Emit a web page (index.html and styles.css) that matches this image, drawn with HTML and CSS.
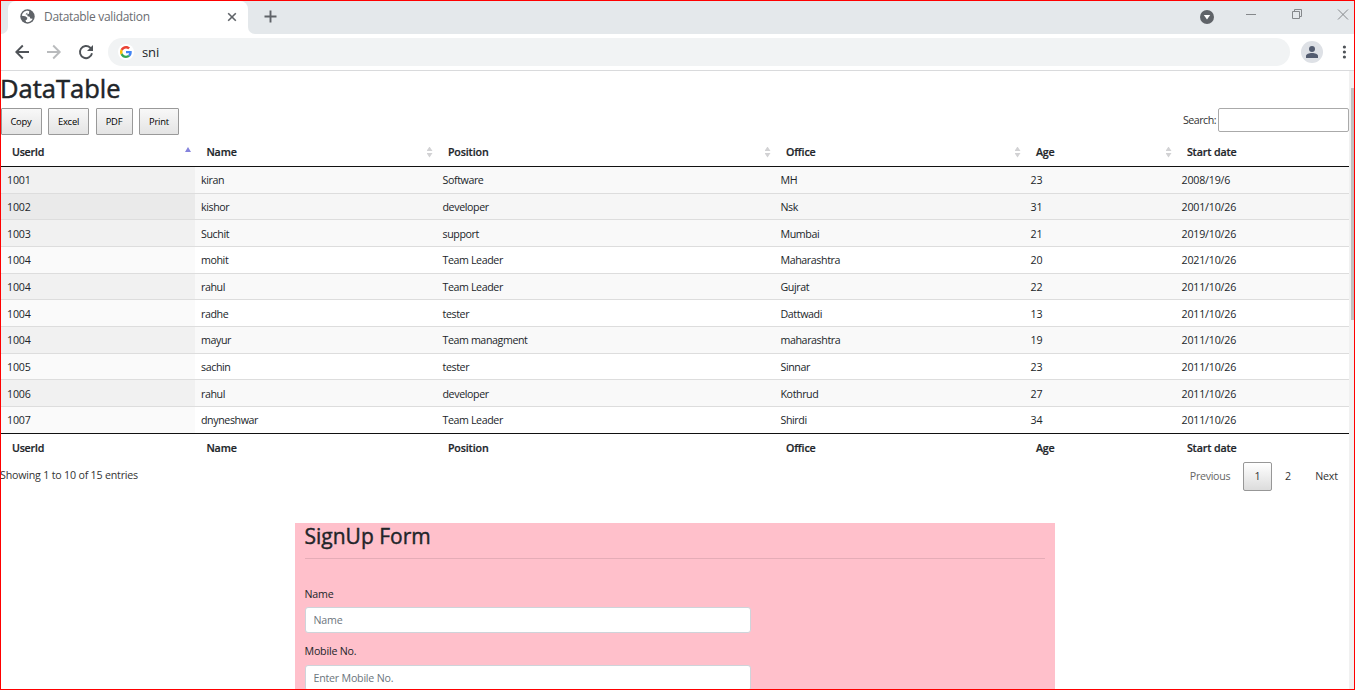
FILE: index.html
```html
<!DOCTYPE html>
<html lang="en">
<head>
<meta charset="utf-8">
<title>Datatable validation</title>
<link rel="stylesheet" href="styles.css">
</head>
<body>
<div class="window">
  <header class="tabstrip">
    <div class="tab-prev"></div>
    <div class="tab">
      <svg class="globe" width="15" height="15" viewBox="0 0 15 15"><circle cx="7.5" cy="7.5" r="7.2" fill="#5f6368"/><path d="M7.500 1.800C4.500 1.800 2.200 4 1.900 6.800L5.300 7.200 7.300 8.800 7 10.500 5.500 11.300 6.200 13.100C9 13.600 11.500 12.200 12.700 9.700L10.300 9.500 9.700 7.800 7.600 7.300 7.100 5.500 8.900 4.700 9.300 2.200Z" fill="#fff"/><path d="M7.300 3.500L5.500 5.200 7.400 5.800z" fill="#5f6368"/></svg>
      <span class="tab-title">Datatable validation</span>
      <svg class="tab-close" width="10" height="10" viewBox="0 0 10 10"><path d="M1.200 1.200l7.600 7.600M8.800 1.200l-7.600 7.600" stroke="#5f6368" stroke-width="1.600"/></svg>
    </div>
    <div class="strip-rest">
      <svg class="plus" width="13" height="13" viewBox="0 0 13 13"><path d="M6.500 .5v12M.5 6.500h12" stroke="#5f6368" stroke-width="1.900"/></svg>
      <svg class="controls" width="156" height="20" viewBox="0 0 156 20"><circle cx="9" cy="11" r="7" fill="#5f6368"/><path d="M5.800 9h6.400L9 13.500z" fill="#fff"/><g fill="none" stroke="#85888b"><path d="M48 8.500h10M94.500 5.500h7v7h-7zM96.500 5.500v-2h7v7h-2M140 3.500l10 10M150 3.500l-10 10"/></g></svg>
    </div>
  </header>
  <div class="toolbar">
    <svg width="78" height="18" viewBox="0 0 78 18" class="nav"><g fill="none" stroke-width="1.900"><path d="M14 9H1.500M7.800 2.500L1.300 9l6.500 6.500" stroke="#4f5358"/><path d="M32 9h12.500M38.200 2.500L44.700 9l-6.500 6.500" stroke="#b9bbbd"/><path d="M77 10.300A6.100 6.100 0 1 1 75.300 4.700L76.500 6" stroke="#4f5358"/></g><path d="M78 2v6h-6z" fill="#4f5358"/></svg>
    <div class="omnibox">
      <span class="g-disc"><svg width="12" height="12" viewBox="0 0 48 48"><path fill="#EA4335" d="M24 9.500c3.500 0 6.700 1.200 9.200 3.600l6.900-6.900C35.900 2.400 30.500 0 24 0 14.600 0 6.500 5.400 2.600 13.200l8 6.200C12.400 13.700 17.700 9.500 24 9.500z"/><path fill="#4285F4" d="M47 24.600c0-1.600-.2-3.100-.4-4.600H24v9h12.900c-.6 3-2.300 5.500-4.800 7.200l7.700 6c4.500-4.200 7.200-10.400 7.200-17.600z"/><path fill="#FBBC05" d="M10.500 28.600c-1-3-1-6.200 0-9.200l-8-6.200c-3.400 6.800-3.400 14.800 0 21.600z"/><path fill="#34A853" d="M24 48c6.500 0 11.900-2.100 15.900-5.800l-7.700-6c-2.200 1.500-4.900 2.300-8.200 2.300-6.300 0-11.600-4.200-13.500-9.900l-8 6.200C6.500 42.600 14.600 48 24 48z"/></svg></span>
      <span class="query">sni</span>
    </div>
    <svg class="avatar" width="22" height="22" viewBox="0 0 22 22"><circle cx="11" cy="11" r="11" fill="#dee1e6"/><circle cx="11" cy="8" r="3" fill="#535c70"/><path d="M5 17v-2c0-4 12-4 12 0v2z" fill="#535c70"/></svg>
    <svg class="dots" width="4" height="14" viewBox="0 0 4 14"><g fill="#4f5358"><circle cx="2.400" cy="2" r="1.600"/><circle cx="2.400" cy="7" r="1.600"/><circle cx="2.400" cy="12" r="1.600"/></g></svg>
  </div>
  <div class="viewport">
    <main class="page">
      <h1 class="title">DataTable</h1>
      <div class="tools">
        <button class="btn copy">Copy</button><button class="btn excel">Excel</button><button class="btn pdf">PDF</button><button class="btn print">Print</button>
        <label class="search">Search:<input class="search-input"></label>
      </div>
      <div class="table">
        <div class="row head"><span class="asc">UserId</span><span class="both">Name</span><span class="both">Position</span><span class="both">Office</span><span class="both">Age</span><span>Start date</span></div>
        <div class="row odd first"><span>1001</span><span>kiran</span><span>Software</span><span>MH</span><span>23</span><span>2008/19/6</span></div>
        <div class="row hover"><span>1002</span><span>kishor</span><span>developer</span><span>Nsk</span><span>31</span><span>2001/10/26</span></div>
        <div class="row odd"><span>1003</span><span>Suchit</span><span>support</span><span>Mumbai</span><span>21</span><span>2019/10/26</span></div>
        <div class="row"><span>1004</span><span>mohit</span><span>Team Leader</span><span>Maharashtra</span><span>20</span><span>2021/10/26</span></div>
        <div class="row odd"><span>1004</span><span>rahul</span><span>Team Leader</span><span>Gujrat</span><span>22</span><span>2011/10/26</span></div>
        <div class="row"><span>1004</span><span>radhe</span><span>tester</span><span>Dattwadi</span><span>13</span><span>2011/10/26</span></div>
        <div class="row odd"><span>1004</span><span>mayur</span><span>Team managment</span><span>maharashtra</span><span>19</span><span>2011/10/26</span></div>
        <div class="row"><span>1005</span><span>sachin</span><span>tester</span><span>Sinnar</span><span>23</span><span>2011/10/26</span></div>
        <div class="row odd"><span>1006</span><span>rahul</span><span>developer</span><span>Kothrud</span><span>27</span><span>2011/10/26</span></div>
        <div class="row"><span>1007</span><span>dnyneshwar</span><span>Team Leader</span><span>Shirdi</span><span>34</span><span>2011/10/26</span></div>
        <div class="row foot"><span>UserId</span><span>Name</span><span>Position</span><span>Office</span><span>Age</span><span>Start date</span></div>
      </div>
      <div class="summary">
        <span class="info">Showing 1 to 10 of 15 entries</span>
        <nav class="pager"><a class="prev">Previous</a><a class="current">1</a><a class="two">2</a><a class="next">Next</a></nav>
      </div>
      <form class="signup">
        <h2 class="form-title">SignUp Form</h2>
        <label class="label">Name</label>
        <input class="field" placeholder="Name">
        <label class="label second">Mobile No.</label>
        <input class="field" placeholder="Enter Mobile No.">
      </form>
    </main>
    <div class="scrollbar"><div class="thumb"></div></div>
  </div>
</div>
</body>
</html>
```
FILE: styles.css
```css
* { box-sizing: border-box; }
body { margin: 0; font-family: "Open Sans", "Noto Sans", sans-serif; font-size: 10.67px; color: #212529; background: #fff; }
.window { width: 1355px; height: 690px; border: 1px solid #f00; overflow: hidden; display: flex; flex-direction: column; }

.tabstrip { height: 33px; display: flex; background: #fff; flex: none; }
.tab-prev { width: 7px; background: #e4e8eb; border-bottom-right-radius: 7px; }
.tab { width: 240px; display: flex; align-items: center; padding: 0 11px 2px 12px; background: linear-gradient(#e4e8eb, #e4e8eb) 0 0 / 100% 8px no-repeat; position: relative; }
.tab::before { content: ""; position: absolute; inset: 0; background: #fff; border-radius: 8px 8px 0 0; }
.tab > * { position: relative; }
.tab-title { font-size: 12px; letter-spacing: -0.32px; color: #6a6d71; margin-left: 9px; flex: 1; line-height: 16px; padding-top: 1px; }
.strip-rest { flex: 1; display: flex; justify-content: space-between; background: #e4e8eb; border-bottom-left-radius: 7px; padding: 0 0 0 15px; }
.plus { margin: 9px 0 0 1px; }
.controls { margin-top: 5px; }

.toolbar { height: 37px; flex: none; display: flex; align-items: center; border-bottom: 1px solid #d9dadc; padding-left: 14px; }
.omnibox { width: 1182px; height: 28px; border-radius: 14px; background: #f1f3f4; margin-left: 15px; display: flex; align-items: center; padding-left: 10px; }
.g-disc { width: 16px; height: 16px; border-radius: 50%; background: #fff; display: flex; align-items: center; justify-content: center; }
.query { font-size: 13px; margin-left: 8px; line-height: 18px; letter-spacing: -0.1px; }
.avatar { margin-left: 11px; }
.dots { margin-left: 19px; }

.viewport { flex: 1; min-height: 0; display: flex; overflow: hidden; }
.page { width: 1348px; flex: none; }
.title { font-size: 25.5px; font-weight: 500; line-height: 32px; height: 32px; margin: 1px 0 4px -1px; letter-spacing: 0; -webkit-text-stroke: 0.5px #212529; }
.tools { height: 30px; display: flex; align-items: flex-start; }
.btn { height: 27px; margin: 0 6px 0 0; padding: 0; border: 1px solid #999; border-radius: 1px; background: linear-gradient(#f8f8f8, #e4e4e4); font: 9.39px "Open Sans", sans-serif; letter-spacing: -0.2px; color: #000; }
.copy { width: 41px; padding-right: 1px; }
.excel { width: 41px; margin-right: 7px; }
.pdf { width: 37px; padding-right: 1px; }
.print { width: 40px; }
.search { margin-left: auto; display: flex; line-height: 24px; color: #333; letter-spacing: -0.5px; }
.search-input { width: 131px; height: 24px; margin-left: 2px; padding: 0; border: 1px solid #aaa; border-radius: 2px; }

.row { display: grid; grid-template-columns: 194px 241.5px 338px 250px 151px 173.5px; grid-template-rows: 25.667px; height: 26.667px; border-top: 1px solid #ddd; line-height: 26px; letter-spacing: -0.4px; }
.row span { padding: 0.3px 0 0 6px; }
.row span:first-child, .row span:nth-child(5), .row span:last-child { letter-spacing: -0.2px; }
.row:not(.head):not(.foot) span:first-child { background: #fafafa; }
.odd { background: #f9f9f9; }
.row.odd:not(.head) span:first-child { background: #f1f1f1; }
.hover { background: #f6f6f6; }
.row.hover:not(.head) span:first-child { background: #eaeaea; }
.row.first { border-top-color: #111; }
.row.head, .row.foot { font-weight: 600; height: 28px; line-height: 28px; grid-template-rows: 28px; border-top: 0; -webkit-text-stroke: 0.2px #212529; }
.row.head span, .row.foot span { padding: 0 0 0 11.4px; letter-spacing: -0.13px; }
.row.head span:first-child, .row.foot span:first-child { padding-left: 11px; letter-spacing: -0.25px; }
.row.foot { border-top: 1px solid #111; }
.row.head .asc, .row.head .both { display: flex; justify-content: space-between; align-items: center; padding-right: 4px; }
.asc::after, .both::after { content: ""; width: 6px; height: 11px; }
.asc::after { height: 5px; margin-bottom: 5px; background: #8583dd; clip-path: polygon(50% 0, 100% 100%, 0 100%); }
.both::after { background: #d2d2d4; clip-path: polygon(50% 0, 100% 42%, 0 42%, 0 58%, 100% 58%, 50% 100%, 0 58%, 0 42%); }

.summary { display: flex; justify-content: space-between; height: 62px; color: #333; letter-spacing: -0.2px; }
.info { line-height: 28px; margin-left: -1px; letter-spacing: -0.2px; }
.pager { display: flex; height: 29px; margin-top: 1px; line-height: 28px; }
.pager a { text-align: center; }
.prev { width: 66px; color: #666; letter-spacing: -0.3px; }
.pager .current { width: 29px; line-height: 26px; border: 1px solid #979797; border-radius: 2px; background: linear-gradient(#fff, #dcdcdc); }
.two { width: 32px; }
.next { width: 45px; }

.signup { width: 760px; height: 240px; margin-left: 294px; background: #ffc0cb; padding: 0 10px 0 9.5px; }
.form-title { height: 36px; margin: 0 0 27px; font-size: 21px; font-weight: 500; line-height: 27px; border-bottom: 1px solid #e5acb7; letter-spacing: 0; -webkit-text-stroke: 0.4px #212529; }
.label { display: block; line-height: 16px; margin-bottom: 5px; letter-spacing: -0.2px; }
.second { margin-top: 10px; margin-bottom: 6px; }
.field { display: block; width: 446px; height: 26px; padding: 0 8px; border: 1px solid #ced4da; border-radius: 3px; font: 10.67px "Open Sans", sans-serif; letter-spacing: -0.22px; }
.field::placeholder { color: #6c757d; opacity: 1; }
.scrollbar { flex: 1; background: #f1f1f1; padding: 17px 0 0 2px; }
.thumb { height: 232px; background: #c1c1c1; }
```
